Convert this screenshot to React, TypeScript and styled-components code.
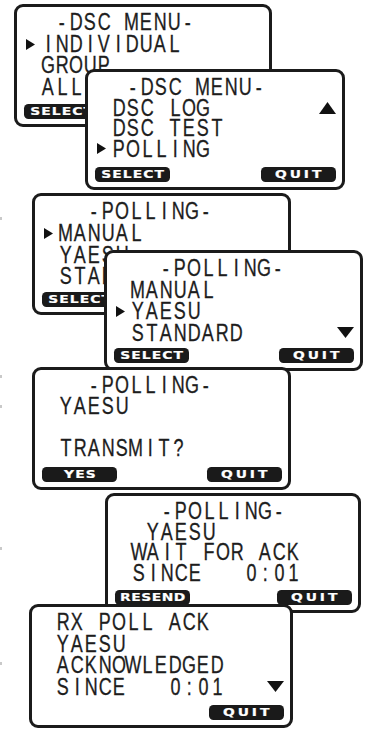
import React from "react";
import styled, { createGlobalStyle } from "styled-components";

const Global = createGlobalStyle`
  html, body { margin: 0; padding: 0; background: #ffffff; }
  body { font-family: "Liberation Sans", Arial, sans-serif; }
`;

const Canvas = styled.div`
  position: relative;
  width: 366px;
  height: 729px;
  overflow: hidden;
  background: #ffffff;
`;

const Screen = styled.section<{ $x: number; $y: number; $w: number; $h: number }>`
  position: absolute;
  left: ${(p) => p.$x}px;
  top: ${(p) => p.$y}px;
  width: ${(p) => p.$w}px;
  height: ${(p) => p.$h}px;
  box-sizing: border-box;
  border: 3px solid #1b1b1b;
  border-radius: 9px;
  background: #ffffff;
  display: flex;
  flex-direction: column;
  padding: 5px 0 5px 0;
`;

const Lines = styled.div`
  display: flex;
  flex-direction: column;
  padding: 0 6px 0 8.5px;
`;

const Line = styled.div<{ $pitch: number }>`
  display: grid;
  grid-template-columns: 15.5px minmax(0, 1fr) auto;
  align-items: center;
  height: ${(p) => p.$pitch}px;
  line-height: ${(p) => p.$pitch}px;
`;

const CursorSlot = styled.div`
  display: flex;
  align-items: center;
  height: 100%;
`;

const Text = styled.div`
  display: flex;
  min-width: 0;
`;

const Cell = styled.span`
  flex: 0 0 14px;
  width: 14px;
  display: flex;
  justify-content: center;
  font-family: "Liberation Sans", Arial, sans-serif;
  font-size: 23px;
  color: #1d1d1d;
  -webkit-text-stroke: 0.3px #1d1d1d;
`;

const Ink = styled.span`
  display: inline-block;
  white-space: pre;
  transform: scaleX(0.78);
`;

const ArrowSlot = styled.div`
  display: flex;
  align-items: center;
  height: 100%;
`;

const Footer = styled.div`
  margin-top: auto;
  display: flex;
  align-items: flex-end;
  padding: 0 6px 0 7px;
`;

const Key = styled.div<{ $right?: boolean }>`
  width: 75px;
  height: 15.5px;
  box-sizing: border-box;
  border-radius: 4.5px;
  background: #1a1a1a;
  display: flex;
  align-items: center;
  justify-content: center;
  margin-left: ${(p) => (p.$right ? "auto" : "0")};
  overflow: hidden;
`;

const KeyLabel = styled.span<{ $spacing: number }>`
  display: inline-block;
  font-family: "DejaVu Sans", "Liberation Sans", Arial, sans-serif;
  font-weight: 700;
  font-size: 10.5px;
  line-height: 1;
  letter-spacing: ${(p) => p.$spacing}px;
  margin-right: ${(p) => -p.$spacing}px;
  color: #ffffff;
  -webkit-text-stroke: 0.2px #ffffff;
  transform: scaleX(1.32);
`;

const Tick = styled.span<{ $y: number }>`
  position: absolute;
  left: 0;
  top: ${(p) => p.$y}px;
  width: 2px;
  height: 3px;
  background: #c9c9c9;
`;

type LineData = { text: string; cursor?: boolean; arrow?: "up" | "down" };
type KeyData = { label: string; spacing: number };
type ScreenData = {
  x: number;
  y: number;
  w: number;
  h: number;
  pitch: number;
  lines: LineData[];
  left?: KeyData;
  right?: KeyData;
};

const SELECT: KeyData = { label: "SELECT", spacing: 0.8 };
const QUIT: KeyData = { label: "QUIT", spacing: 2.2 };
const YES: KeyData = { label: "YES", spacing: 0.8 };
const RESEND: KeyData = { label: "RESEND", spacing: 0.4 };

const screens: ScreenData[] = [
  {
    x: 14, y: 4, w: 258, h: 123, pitch: 21.5,
    lines: [
      { text: " -DSC MENU-" },
      { text: "INDIVIDUAL", cursor: true },
      { text: "GROUP" },
      { text: "ALL" },
    ],
    left: SELECT,
  },
  {
    x: 85, y: 69, w: 260, h: 121, pitch: 20.5,
    lines: [
      { text: " -DSC MENU-" },
      { text: "DSC LOG", arrow: "up" },
      { text: "DSC TEST" },
      { text: "POLLING", cursor: true },
    ],
    left: SELECT,
    right: QUIT,
  },
  {
    x: 32, y: 193, w: 259, h: 122, pitch: 21.8,
    lines: [
      { text: "  -POLLING-" },
      { text: "MANUAL", cursor: true },
      { text: "YAESU" },
      { text: "STANDARD" },
    ],
    left: SELECT,
  },
  {
    x: 104, y: 250, w: 259, h: 121, pitch: 21.5,
    lines: [
      { text: "  -POLLING-" },
      { text: "MANUAL" },
      { text: "YAESU", cursor: true },
      { text: "STANDARD", arrow: "down" },
    ],
    left: SELECT,
    right: QUIT,
  },
  {
    x: 32, y: 367, w: 259, h: 123, pitch: 21,
    lines: [
      { text: "  -POLLING-" },
      { text: "YAESU" },
      { text: " " },
      { text: "TRANSMIT?" },
    ],
    left: YES,
    right: QUIT,
  },
  {
    x: 105, y: 493, w: 256, h: 120, pitch: 20.5,
    lines: [
      { text: "  -POLLING-" },
      { text: " YAESU" },
      { text: "WAIT FOR ACK" },
      { text: "SINCE   0:01" },
    ],
    left: RESEND,
    right: QUIT,
  },
  {
    x: 29, y: 604, w: 264, h: 124, pitch: 21.5,
    lines: [
      { text: "RX POLL ACK" },
      { text: "YAESU" },
      { text: "ACKNOWLEDGED" },
      { text: "SINCE   0:01", arrow: "down" },
    ],
    right: QUIT,
  },
];

const Cursor = () => (
  <svg width="9" height="11" viewBox="0 0 9 11" aria-hidden="true">
    <polygon points="0,0 9,5.5 0,11" fill="#111" />
  </svg>
);

const Arrow = ({ dir }: { dir: "up" | "down" }) => (
  <svg width="17" height="12" viewBox="0 0 17 12" aria-hidden="true">
    {dir === "up" ? (
      <polygon points="0,12 8.5,0 17,12" fill="#111" />
    ) : (
      <polygon points="0,0 17,0 8.5,11" fill="#111" />
    )}
  </svg>
);

const LcdText = ({ text }: { text: string }) => (
  <Text>
    {Array.from(text).map((ch, i) => (
      <Cell key={i}>
        <Ink>{ch}</Ink>
      </Cell>
    ))}
  </Text>
);

const LcdKey = ({ data, right }: { data: KeyData; right?: boolean }) => (
  <Key $right={right}>
    <KeyLabel $spacing={data.spacing}>{data.label}</KeyLabel>
  </Key>
);

const ticks = [217, 375, 405, 547, 662];

export default function App() {
  return (
    <>
      <Global />
      <Canvas>
        {ticks.map((y) => (
          <Tick key={y} $y={y} />
        ))}
        {screens.map((s, i) => (
          <Screen key={i} $x={s.x} $y={s.y} $w={s.w} $h={s.h}>
            <Lines>
              {s.lines.map((l, j) => (
                <Line key={j} $pitch={s.pitch}>
                  <CursorSlot>{l.cursor ? <Cursor /> : null}</CursorSlot>
                  <LcdText text={l.text} />
                  <ArrowSlot>{l.arrow ? <Arrow dir={l.arrow} /> : null}</ArrowSlot>
                </Line>
              ))}
            </Lines>
            <Footer>
              {s.left ? <LcdKey data={s.left} /> : null}
              {s.right ? <LcdKey data={s.right} right /> : null}
            </Footer>
          </Screen>
        ))}
      </Canvas>
    </>
  );
}
